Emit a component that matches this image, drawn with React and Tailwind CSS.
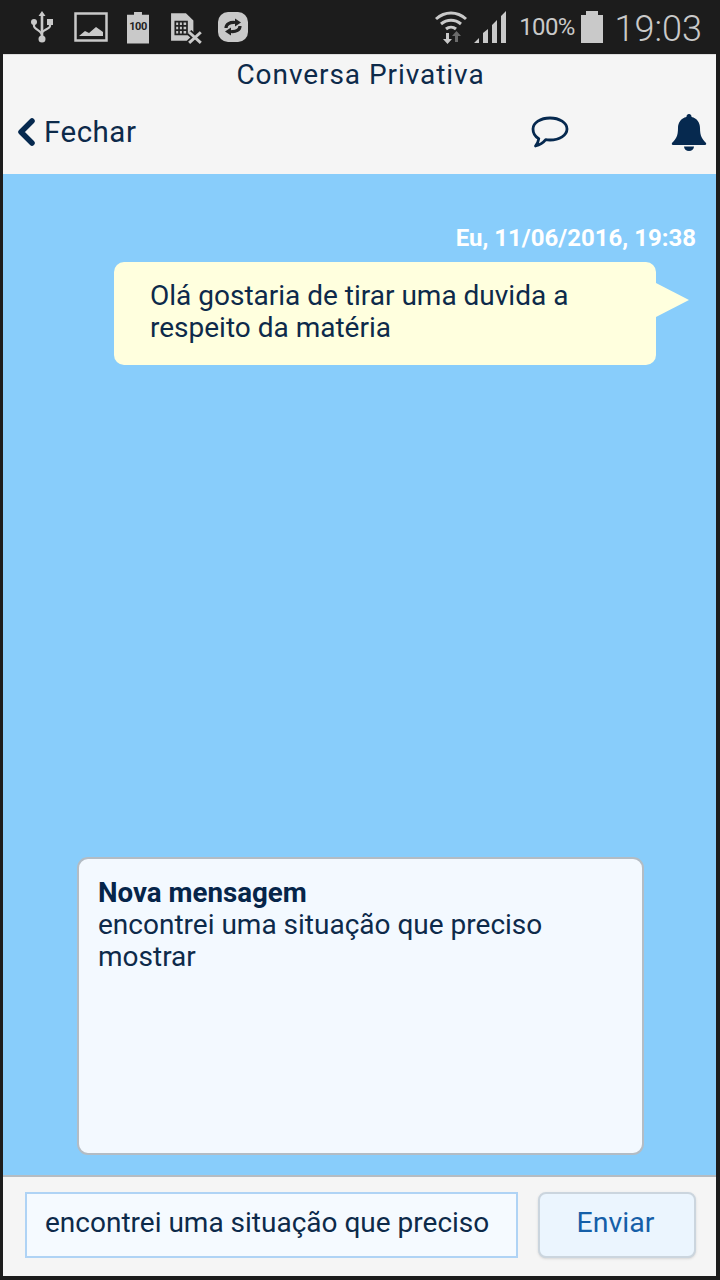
import React from 'react';

const Usb = () => (
  <svg width="24" height="34" viewBox="0 0 24 34" fill="none">
    <path d="M12 1l3.5 5h-2.2v20h-2.6V6H8.500z" fill="#c9c9c9" />
    <circle cx="12" cy="29" r="3.500" fill="#c9c9c9" />
    <circle cx="4" cy="12" r="3" fill="#c9c9c9" />
    <rect x="17" y="9" width="6" height="6" fill="#c9c9c9" />
    <path d="M4 13v3c0 3 8 5 8 9M20 14v2c0 3-8 4-8 7" stroke="#c9c9c9" strokeWidth="2.200" />
  </svg>
);

const Picture = () => (
  <svg width="34" height="30" viewBox="0 0 34 30" fill="none">
    <rect x="1.500" y="1.500" width="31" height="27" stroke="#c9c9c9" strokeWidth="2.500" />
    <path d="M5 24l6-5 4 2 7-6 7 5v4z" fill="#c9c9c9" />
  </svg>
);

const Sd100 = () => (
  <div className="relative w-[22px] h-[32px] mt-[1px] bg-[#c9c9c9] flex items-center justify-center [clip-path:polygon(14%_10%,32%_10%,32%_0,68%_0,68%_10%,100%_10%,100%_100%,0_100%,0_10%)]">
    <span className="text-[11px] font-bold text-[#222222] tracking-[-0.5px]">100</span>
  </div>
);

const SimOff = () => (
  <svg width="34" height="34" viewBox="0 0 32 32" fill="none">
    <path d="M1 2h14l7 7v13l-5 6H1z" fill="#c9c9c9" />
    <path d="M5 10h11v12H5zM8.500 10v12M12 10v12M5 14h11M5 18h11" stroke="#222222" strokeWidth="1.600" />
    <path d="M18 20l11 10M29 20L18 30" stroke="#1c1c1c" strokeWidth="6" />
    <path d="M18 20l11 10M29 20L18 30" stroke="#c9c9c9" strokeWidth="2.800" />
  </svg>
);

const SyncIcon = () => (
  <svg width="30" height="30" viewBox="0 0 30 30" fill="none">
    <rect x="0" y="0" width="30" height="30" rx="10" fill="#c9c9c9" />
    <path d="M8 16c0-4 4-6 9-5.500" stroke="#222222" strokeWidth="3.200" />
    <path d="M17 6.500l6 4-6 4z" fill="#222222" />
    <path d="M22 14c0 4-4 6-9 5.500" stroke="#222222" strokeWidth="3.200" />
    <path d="M13 23.500l-6-4 6-4z" fill="#222222" />
  </svg>
);

const WifiIcon = () => (
  <svg width="34" height="36" viewBox="0 0 34 36" fill="none">
    <path d="M2 10c9-8 21-8 30 0M7 15c6-5 14-5 20 0M12 20c3-2.500 7-2.500 10 0" stroke="#c9c9c9" strokeWidth="3" />
    <path d="M12 24h3v6h3l-4.500 5L9 30h3z" fill="#c9c9c9" />
    <path d="M21 33v-6h-3l4.500-5 4.500 5h-3v6z" fill="#6b6b6b" />
  </svg>
);

const Signal = () => (
  <svg width="34" height="34" viewBox="0 0 34 34" fill="#c9c9c9">
    <path d="M1 33l5-5v5zM10 33V23l5-4v14zM19 33V15l5-5v23zM28 33V6l5-5v32z" />
  </svg>
);

const BatteryIcon = () => (
  <div className="flex flex-col items-center mt-[-1px]">
    <div className="w-[12px] h-[4px] bg-[#c9c9c9]" />
    <div className="w-[22px] h-[28px] bg-[#c9c9c9]" />
  </div>
);

const StatusBar = () => (
  <div className="h-[54px] bg-[#1c1c1c] flex items-center pl-[30px] pr-[18px] shrink-0">
    <div className="flex items-center">
      <div className="w-[24px]"><Usb /></div>
      <div className="ml-[20px]"><Picture /></div>
      <div className="ml-[19px]"><Sd100 /></div>
      <div className="ml-[21px] mt-[2px]"><SimOff /></div>
      <div className="ml-[14px]"><SyncIcon /></div>
    </div>
    <div className="ml-auto flex items-center text-[#c9c9c9]">
      <WifiIcon />
      <div className="ml-[5px]"><Signal /></div>
      <span className="ml-[12px] text-[24px] tracking-[-0.7px]">100%</span>
      <div className="ml-[6px]"><BatteryIcon /></div>
      <span className="ml-[12px] mt-[4px] text-[36px] font-light leading-none">19:03</span>
    </div>
  </div>
);

const Header = () => (
  <div className="h-[120px] shrink-0 bg-[#f5f5f5] border-t border-[#dddddd] flex flex-col text-[#0d2a4a]">
    <div className="text-center text-[28px] tracking-[0.95px] leading-[38px] pl-[2px] pt-[1px]">Conversa Privativa</div>
    <div className="flex items-center h-[54px] mt-[11px]">
      <svg className="ml-[14px]" width="18" height="28" viewBox="0 0 18 28" fill="none">
        <path d="M15 3L4 14l11 11" stroke="#06294f" strokeWidth="5.500" strokeLinecap="round" strokeLinejoin="round" />
      </svg>
      <span className="ml-[9px] text-[29.500px] tracking-[0.5px]">Fechar</span>
      <svg className="ml-[395px]" width="38" height="32" viewBox="0 0 38 32" fill="none">
        <path d="M19 2c9.500 0 17 4.800 17 11s-7.500 11-17 11c-1.500 0-3 0-4.300-.3C12.500 26.500 9 29 4.500 30c1.500-2 3-4.500 3.300-7.300C4 20.500 2 17 2 13 2 6.800 9.500 2 19 2z" stroke="#06294f" strokeWidth="2.800" strokeLinejoin="round" />
      </svg>
      <svg className="ml-[102px]" width="36" height="38" viewBox="0 0 36 38" fill="#06294f">
        <path d="M18 1a2.500 2.500 0 0 1 2.500 3c5.500 1.200 8.500 5.500 8.500 11 0 8 2 11 6 15 .5 1 0 2-1 2H2c-1 0-1.500-1-1-2 4-4 6-7 6-15 0-5.500 3-9.800 8.500-11A2.500 2.500 0 0 1 18 1z" />
        <path d="M13 33.500h10a5 4.500 0 0 1-10 0z" />
      </svg>
    </div>
  </div>
);

const Bubble = () => (
  <div className="flex flex-col items-end pr-[20px] pt-[48px]">
    <div className="text-white text-[24px] font-bold leading-[32px]">Eu, 11/06/2016, 19:38</div>
    <div className="relative mt-[8px] mr-[40px] w-[542px] h-[103px] bg-[#ffffde] rounded-[10px] pl-[36px] pt-[18px] text-[28px] leading-[32px] text-[#0d2a4a]">
      <div>Olá gostaria de tirar uma duvida a</div>
      <div>respeito da matéria</div>
      <div className="absolute top-[21px] right-[-33px] w-0 h-0 border-y-[17px] border-y-transparent border-l-[33px] border-l-[#ffffde]" />
    </div>
  </div>
);

const NovaMensagem = () => (
  <div className="ml-[74px] mb-[20px] w-[567px] h-[298px] bg-[#f3f9ff] border-2 border-[#b3bcc4] rounded-[11px] pl-[19px] pt-[18px] text-[28px] leading-[32px] text-[#0d2a4a]">
    <div className="font-bold text-[#06254a] text-[27.700px]">Nova mensagem</div>
    <div>encontrei uma situação que preciso</div>
    <div>mostrar</div>
  </div>
);

const Footer = () => (
  <div className="h-[101px] shrink-0 bg-[#f5f5f5] border-t-2 border-[#b5bcc2] flex pl-[22px] pt-[15px]">
    <div className="w-[493px] h-[66px] bg-[#f5faff] border-2 border-[#afd3f5] pl-[18px] pb-[5px] flex items-center text-[28px] text-[#0d2a4a]">
      encontrei uma situação que preciso
    </div>
    <button className="ml-[20px] w-[158px] h-[66px] pb-[3px] pr-[3px] bg-[#ebf5fe] border-2 border-[#cbd5de] rounded-[8px] shadow-sm text-[28.500px] text-[#155fa8]">
      Enviar
    </button>
  </div>
);

export default function App() {
  return (
    <div className="w-[720px] h-[1280px] bg-[#1c1c1c] flex flex-col overflow-hidden font-['Roboto',sans-serif]">
      <StatusBar />
      <div className="ml-[3px] mr-[4px] mb-[4px] flex-1 flex flex-col min-h-0 bg-[#f5f5f5]">
        <Header />
        <div className="flex-1 min-h-0 bg-[#88cdfb] flex flex-col justify-between">
          <Bubble />
          <NovaMensagem />
        </div>
        <Footer />
      </div>
    </div>
  );
}
